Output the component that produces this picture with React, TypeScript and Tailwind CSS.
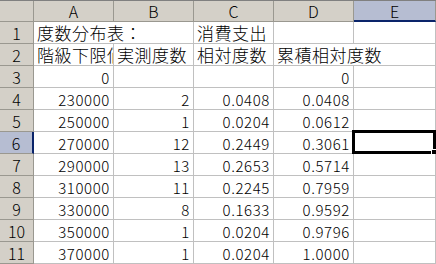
import React from 'react';

type Cell = {
  v: string;
  num?: boolean;
  spill?: boolean; // text runs into the next (empty) cell
  clip?: boolean;
};

const cols = ['A', 'B', 'C', 'D', 'E'];

const t = (v: string, extra: Partial<Cell> = {}): Cell => ({ v, ...extra });
const n = (v: string): Cell => ({ v, num: true });
const e: Cell = { v: '' };

const rows: Cell[][] = [
  [t('度数分布表：', { spill: true }), e, t('消費支出'), e, e],
  [t('階級下限値', { clip: true }), t('実測度数'), t('相対度数'), t('累積相対度数', { spill: true }), e],
  [n('0'), e, e, n('0'), e],
  [n('230000'), n('2'), n('0.0408'), n('0.0408'), e],
  [n('250000'), n('1'), n('0.0204'), n('0.0612'), e],
  [n('270000'), n('12'), n('0.2449'), n('0.3061'), e],
  [n('290000'), n('13'), n('0.2653'), n('0.5714'), e],
  [n('310000'), n('11'), n('0.2245'), n('0.7959'), e],
  [n('330000'), n('8'), n('0.1633'), n('0.9592'), e],
  [n('350000'), n('1'), n('0.0204'), n('0.9796'), e],
  [n('370000'), n('1'), n('0.0204'), n('1.0000'), e],
];

const activeRow = 5;
const activeCol = 4;

const hdr = 'flex items-center justify-center text-[16px] font-light leading-none';

export default function App() {
  return (
    <div
      className="w-[436px] h-[264px] overflow-hidden bg-white text-black border-t border-[#808080]"
      style={{ fontFamily: '"Noto Sans CJK JP", "Noto Sans", sans-serif' }}
    >
      <div className="grid grid-cols-[34px_80px_80px_80px_80px_1fr] grid-rows-[21px] auto-rows-[22px]">
        {/* column headers */}
        <div className="bg-[#d4d0c8] border-r border-b border-[#9a9890]" />
        {cols.map((c, i) => (
          <div
            key={c}
            className={
              i === activeCol
                ? `bg-[#b6bdd2] border-r border-[#9a9890] border-b-2 border-b-[#0a246a] ${hdr}`
                : `bg-[#d4d0c8] border-r border-b border-[#9a9890] ${hdr}`
            }
          >
            {c}
          </div>
        ))}

        {rows.map((row, r) => (
          <React.Fragment key={r}>
            <div
              className={
                r === activeRow
                  ? `bg-[#b6bdd2] border-r-2 border-r-[#0a246a] border-b border-[#9a9890] ${hdr}`
                  : `bg-[#d4d0c8] border-r border-b border-[#9a9890] ${hdr}`
              }
            >
              {r + 1}
            </div>
            {row.map((cell, c) => {
              const active = r === activeRow && c === activeCol;
              return (
                <div
                  key={c}
                  className={
                    'relative border-b border-[#c0c0c0] flex items-end pb-[2px] leading-none whitespace-nowrap px-[3px] font-light ' +
                    (cell.spill ? 'border-r-0 z-10 ' : 'border-r ') +
                    (cell.num
                      ? 'justify-end text-[15px] tracking-[0.6px] '
                      : 'justify-start text-[17px] tracking-[0.5px] ') +
                    (cell.clip ? 'overflow-hidden' : '')
                  }
                >
                  {cell.v}
                  {active && (
                    <div className="absolute -left-[2px] -top-[2px] -right-px -bottom-px border-[3px] border-black">
                      <div className="absolute -right-[4px] -bottom-[4px] w-[6px] h-[6px] bg-black border border-white" />
                    </div>
                  )}
                </div>
              );
            })}
          </React.Fragment>
        ))}
      </div>
    </div>
  );
}
